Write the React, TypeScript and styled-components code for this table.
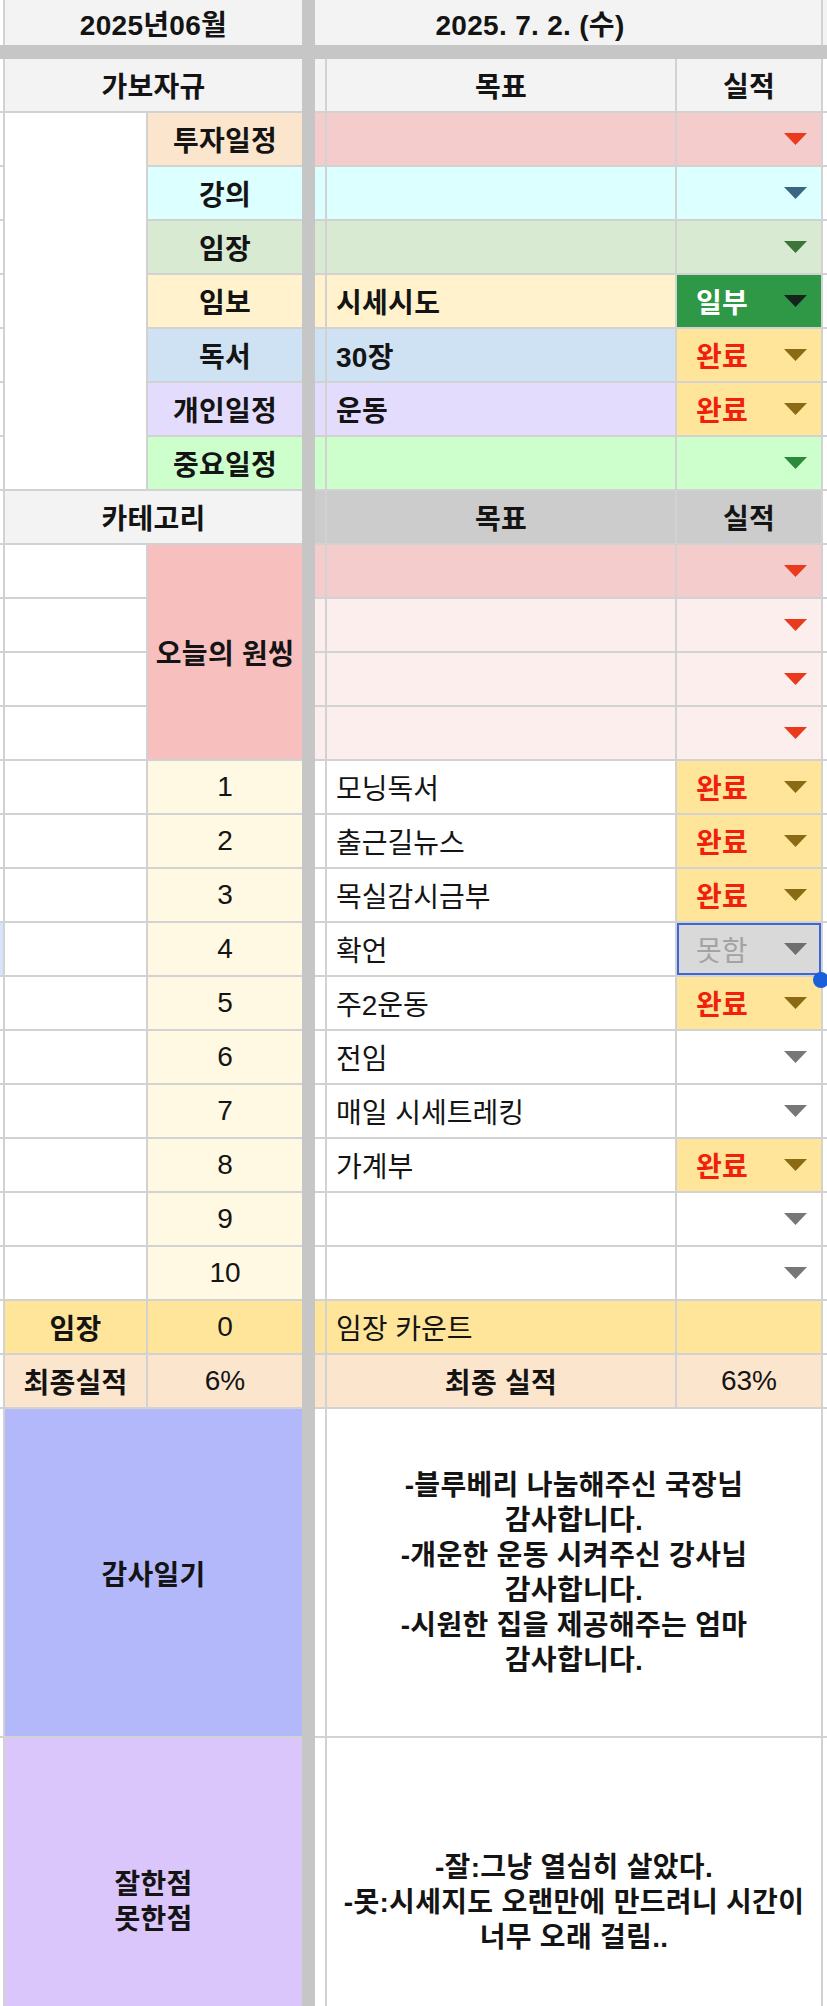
import React from 'react';
import styled, { createGlobalStyle } from 'styled-components';

const GlobalStyle = createGlobalStyle`
  html, body { margin: 0; padding: 0; background: #ffffff; }
  body { font-family: "Liberation Sans", "Noto Sans CJK KR", sans-serif; }
`;

const Viewport = styled.div`
  width: 827px;
  height: 2006px;
  overflow: hidden;
  background: #ffffff;
`;

const Sheet = styled.div`
  display: grid;
  grid-template-columns: 3px 141px 154px 9px 10px 348px 144px 4px;
  grid-template-rows: 45px 10px 52px repeat(24, 52px) 327px 328px;
  gap: 2px;
  background: #d2d2d2;
  font-size: 28px;
  color: #141414;
`;

type CellProps = {
  $col: string;
  $row: string;
  $bg?: string;
  $bold?: boolean;
  $left?: boolean;
  $color?: string;
};

const Cell = styled.div<CellProps>`
  grid-column: ${(p) => p.$col};
  grid-row: ${(p) => p.$row};
  background: ${(p) => p.$bg ?? '#ffffff'};
  display: flex;
  align-items: center;
  justify-content: ${(p) => (p.$left ? 'flex-start' : 'center')};
  padding-left: ${(p) => (p.$left ? '9px' : '0')};
  font-weight: ${(p) => (p.$bold ? 700 : 400)};
  letter-spacing: ${(p) => (p.$bold ? '0.3px' : '0')};
  color: ${(p) => p.$color ?? '#141414'};
  white-space: nowrap;
  overflow: hidden;
  min-width: 0;
`;

const DateCell = styled(Cell)`
  padding-right: 76px;
`;

const Divider = styled.div`
  grid-column: 4;
  grid-row: 1 / -1;
  background: #c6c6c6;
  margin: 0 -2px;
`;

const Band = styled.div<{ $col: string }>`
  grid-column: ${(p) => p.$col};
  grid-row: 2;
  background: #c6c6c6;
  margin: -2px 0;
`;

const StatusBox = styled.div<{ $row: string; $bg: string; $selected?: boolean }>`
  grid-column: 7;
  grid-row: ${(p) => p.$row};
  position: relative;
  background: ${(p) => p.$bg};
  display: flex;
  align-items: center;
  justify-content: space-between;
  padding: 0 14px 0 19px;
  box-shadow: ${(p) => (p.$selected ? 'inset 0 0 0 2px #3d67d6' : 'none')};
`;

const StatusText = styled.span<{ $color: string; $bold: boolean }>`
  color: ${(p) => p.$color};
  font-weight: ${(p) => (p.$bold ? 700 : 400)};
  letter-spacing: ${(p) => (p.$bold ? '0.3px' : '0')};
  white-space: nowrap;
`;

const FillHandle = styled.span`
  position: absolute;
  left: 136px;
  top: 49px;
  width: 16px;
  height: 16px;
  border-radius: 50%;
  background: #1b5fd9;
  z-index: 2;
`;

const ArrowSvg = styled.svg`
  flex: none;
  margin-left: auto;
`;

const NoteBlock = styled.div`
  display: flex;
  flex-direction: column;
  align-items: center;
  line-height: 35px;
  font-weight: 700;
  letter-spacing: 0.3px;
  text-align: center;
`;

const Arrow = ({ color }: { color: string }) => (
  <ArrowSvg width="23" height="12" viewBox="0 0 23 12">
    <polygon points="0,0 23,0 11.5,12" fill={color} />
  </ArrowSvg>
);

type Status = { text: string; bg: string; color: string; arrow: string; bold: boolean };

const DONE: Status = { text: '완료', bg: '#ffe599', color: '#f0200c', arrow: '#8a6a12', bold: true };
const PART: Status = { text: '일부', bg: '#2f9846', color: '#ffffff', arrow: '#15241a', bold: true };
const MISS: Status = { text: '못함', bg: '#d9d9d9', color: '#a3a3a3', arrow: '#6e6e6e', bold: false };

const StatusCell = ({
  row,
  bg,
  arrow,
  status,
  selected,
}: {
  row: number;
  bg: string;
  arrow: string;
  status?: Status;
  selected?: boolean;
}) => (
  <StatusBox $row={String(row)} $bg={status ? status.bg : bg} $selected={selected}>
    {status && (
      <StatusText $color={status.color} $bold={status.bold}>
        {status.text}
      </StatusText>
    )}
    <Arrow color={status ? status.arrow : arrow} />
    {selected && <FillHandle />}
  </StatusBox>
);

const topBlock = [
  { label: '투자일정', labelBg: '#fce5cd', bg: '#f4cccc', goal: '', arrow: '#ea3a1e' },
  { label: '강의', labelBg: '#dcffff', bg: '#dcffff', goal: '', arrow: '#3a6682' },
  { label: '임장', labelBg: '#d9ead3', bg: '#d9ead3', goal: '', arrow: '#3d7438' },
  { label: '임보', labelBg: '#fff2cc', bg: '#fff2cc', goal: '시세시도', arrow: '', status: PART },
  { label: '독서', labelBg: '#cfe2f3', bg: '#cfe2f3', goal: '30장', arrow: '', status: DONE },
  { label: '개인일정', labelBg: '#e4dcfd', bg: '#e4dcfd', goal: '운동', arrow: '', status: DONE },
  { label: '중요일정', labelBg: '#ccffcc', bg: '#ccffcc', goal: '', arrow: '#2b8a3a' },
];

const oneThing = ['#f4cccc', '#fdeeee', '#fdeeee', '#fdeeee'];

const tasks: { goal: string; status?: Status; selected?: boolean }[] = [
  { goal: '모닝독서', status: DONE },
  { goal: '출근길뉴스', status: DONE },
  { goal: '목실감시금부', status: DONE },
  { goal: '확언', status: MISS, selected: true },
  { goal: '주2운동', status: DONE },
  { goal: '전임' },
  { goal: '매일 시세트레킹' },
  { goal: '가계부', status: DONE },
  { goal: '' },
  { goal: '' },
];

const thanks = [
  '-블루베리 나눔해주신 국장님',
  '감사합니다.',
  '-개운한 운동 시켜주신 강사님',
  '감사합니다.',
  '-시원한 집을 제공해주는 엄마',
  '감사합니다.',
];

const review = ['-잘:그냥 열심히 살았다.', '-못:시세지도 오랜만에 만드려니 시간이', '너무 오래 걸림..'];

const HEAD = '#f3f3f3';
const GRAY = '#cccccc';
const SELECT_ROW = 19;

export default function App() {
  const strips = [];
  for (let r = 1; r <= 29; r++) {
    if (r === 2) continue;
    strips.push(<Cell key={`s${r}`} $col="1" $row={String(r)} $bg={r === SELECT_ROW ? '#d5e3fb' : '#ffffff'} />);
    strips.push(<Cell key={`f${r}`} $col="8" $row={String(r)} $bg={r === 1 ? HEAD : '#ffffff'} />);
  }

  return (
    <Viewport>
      <GlobalStyle />
      <Sheet>
        {strips}

        <Cell $col="2 / 4" $row="1" $bg={HEAD} $bold>
          2025년06월
        </Cell>
        <DateCell $col="5 / 8" $row="1" $bg={HEAD} $bold>
          2025. 7. 2. (수)
        </DateCell>

        <Band $col="1 / 4" />
        <Band $col="5 / 9" />

        <Cell $col="2 / 4" $row="3" $bg={HEAD} $bold>
          가보자규
        </Cell>
        <Cell $col="5" $row="3" $bg={HEAD} />
        <Cell $col="6" $row="3" $bg={HEAD} $bold>
          목표
        </Cell>
        <Cell $col="7" $row="3" $bg={HEAD} $bold>
          실적
        </Cell>

        <Cell $col="2" $row="4 / 11" />
        {topBlock.map((item, i) => {
          const row = 4 + i;
          return (
            <React.Fragment key={item.label}>
              <Cell $col="3" $row={String(row)} $bg={item.labelBg} $bold>
                {item.label}
              </Cell>
              <Cell $col="5" $row={String(row)} $bg={item.bg} />
              <Cell $col="6" $row={String(row)} $bg={item.bg} $bold $left>
                {item.goal}
              </Cell>
              <StatusCell row={row} bg={item.bg} arrow={item.arrow} status={item.status} />
            </React.Fragment>
          );
        })}

        <Cell $col="2 / 4" $row="11" $bg={HEAD} $bold>
          카테고리
        </Cell>
        <Cell $col="5" $row="11" $bg={GRAY} />
        <Cell $col="6" $row="11" $bg={GRAY} $bold>
          목표
        </Cell>
        <Cell $col="7" $row="11" $bg={GRAY} $bold>
          실적
        </Cell>

        <Cell $col="3" $row="12 / 16" $bg="#f8bfbf" $bold>
          오늘의 원씽
        </Cell>
        {oneThing.map((bg, i) => {
          const row = 12 + i;
          return (
            <React.Fragment key={`o${i}`}>
              <Cell $col="2" $row={String(row)} />
              <Cell $col="5" $row={String(row)} $bg={bg} />
              <Cell $col="6" $row={String(row)} $bg={bg} />
              <StatusCell row={row} bg={bg} arrow="#ea3a1e" />
            </React.Fragment>
          );
        })}

        {tasks.map((t, i) => {
          const row = 16 + i;
          return (
            <React.Fragment key={`t${i}`}>
              <Cell $col="2" $row={String(row)} />
              <Cell $col="3" $row={String(row)} $bg="#fff8e2">
                {i + 1}
              </Cell>
              <Cell $col="5" $row={String(row)} />
              <Cell $col="6" $row={String(row)} $left>
                {t.goal}
              </Cell>
              <StatusCell row={row} bg="#ffffff" arrow="#777777" status={t.status} selected={t.selected} />
            </React.Fragment>
          );
        })}

        <Cell $col="2" $row="26" $bg="#ffe599" $bold>
          임장
        </Cell>
        <Cell $col="3" $row="26" $bg="#ffe599">
          0
        </Cell>
        <Cell $col="5" $row="26" $bg="#ffe599" />
        <Cell $col="6" $row="26" $bg="#ffe599" $left>
          임장 카운트
        </Cell>
        <Cell $col="7" $row="26" $bg="#ffe599" />

        <Cell $col="2" $row="27" $bg="#fce5cd" $bold>
          최종실적
        </Cell>
        <Cell $col="3" $row="27" $bg="#fce5cd">
          6%
        </Cell>
        <Cell $col="5" $row="27" $bg="#fce5cd" />
        <Cell $col="6" $row="27" $bg="#fce5cd" $bold>
          최종 실적
        </Cell>
        <Cell $col="7" $row="27" $bg="#fce5cd">
          63%
        </Cell>

        <Cell $col="2 / 4" $row="28" $bg="#b3b8fb" $bold>
          감사일기
        </Cell>
        <Cell $col="5" $row="28" />
        <Cell $col="6 / 8" $row="28">
          <NoteBlock>
            {thanks.map((line, i) => (
              <span key={i}>{line}</span>
            ))}
          </NoteBlock>
        </Cell>

        <Cell $col="2 / 4" $row="29" $bg="#dac6fb">
          <NoteBlock>
            <span>잘한점</span>
            <span>못한점</span>
          </NoteBlock>
        </Cell>
        <Cell $col="5" $row="29" />
        <Cell $col="6 / 8" $row="29">
          <NoteBlock>
            {review.map((line, i) => (
              <span key={i}>{line}</span>
            ))}
          </NoteBlock>
        </Cell>

        <Divider />
      </Sheet>
    </Viewport>
  );
}
